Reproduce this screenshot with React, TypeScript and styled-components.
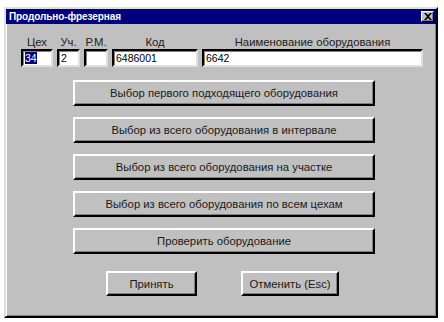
import React from 'react';
import styled, { createGlobalStyle } from 'styled-components';

const GlobalStyle = createGlobalStyle`
  html, body {
    margin: 0;
    padding: 0;
    background: #ffffff;
  }
  body {
    font-family: 'Liberation Sans', Arial, sans-serif;
    font-size: 11.3px;
  }
`;

const fields = [
  { label: 'Цех', width: 32, value: '34', selected: true },
  { label: 'Уч.', width: 23, value: '2' },
  { label: 'Р.М.', width: 24, value: '' },
  { label: 'Код', width: 86, value: '6486001' },
  { label: 'Наименование оборудования', width: 221, value: '6642' },
];

const actions = [
  'Выбор первого подходящего оборудования',
  'Выбор из всего оборудования в интервале',
  'Выбор из всего оборудования на участке',
  'Выбор из всего оборудования по всем цехам',
  'Проверить оборудование',
];

const App = () => {
  return (
    <>
      <GlobalStyle />
      <Window>
        <TitleBar>
          <Title>Продольно-фрезерная</Title>
          <CloseButton>
            <svg width="8" height="7" viewBox="0 0 8 7">
              <path d="M0 0h2l2 2 2-2h2L5 3.5 8 7H6L4 5 2 7H0l3-3.5z" fill="#000" />
            </svg>
          </CloseButton>
        </TitleBar>

        <Body>
          <FieldsRow>
            {fields.map((f) => (
              <Field key={f.label} $width={f.width}>
                <FieldLabel>{f.label}</FieldLabel>
                <TextBox>
                  {f.selected ? <Selected>{f.value}</Selected> : f.value}
                </TextBox>
              </Field>
            ))}
          </FieldsRow>

          <ActionList>
            {actions.map((a) => (
              <ActionButton key={a}>{a}</ActionButton>
            ))}
          </ActionList>

          <Footer>
            <DialogButton $width={91}>Принять</DialogButton>
            <DialogButton $width={98}>Отменить (Esc)</DialogButton>
          </Footer>
        </Body>
      </Window>
    </>
  );
};

export default App;

const Window = styled.div`
  margin: 7px 0 0 4px;
  width: 434px;
  height: 311px;
  box-sizing: border-box;
  background: #c0c0c0;
  border: 2px solid;
  border-color: #dfdfdf #000000 #000000 #dfdfdf;
  box-shadow: inset 1px 1px 0 #ffffff, inset -1px -1px 0 #808080;
  display: flex;
  flex-direction: column;
`;

const TitleBar = styled.div`
  height: 15px;
  background: #000080;
  display: flex;
  align-items: center;
  justify-content: space-between;
  padding: 0 2px 0 3px;
`;

const Title = styled.span`
  color: #ffffff;
  font-weight: bold;
  font-size: 10px;
  letter-spacing: -0.1px;
`;

const CloseButton = styled.div`
  width: 13px;
  height: 11px;
  box-sizing: border-box;
  background: #c0c0c0;
  border: 1px solid;
  border-color: #ffffff #000000 #000000 #ffffff;
  box-shadow: inset -1px -1px 0 #808080;
  display: flex;
  align-items: center;
  justify-content: center;
`;

const Body = styled.div`
  flex: 1;
  padding: 11px 0 0 15px;
  display: flex;
  flex-direction: column;
`;

const FieldsRow = styled.div`
  display: flex;
  gap: 4px;
`;

const Field = styled.div<{ $width: number }>`
  width: ${(p) => p.$width}px;
  display: flex;
  flex-direction: column;
  align-items: center;
`;

const FieldLabel = styled.div`
  height: 14px;
  line-height: 14px;
  color: #202020;
  white-space: nowrap;
`;

const TextBox = styled.div`
  width: 100%;
  height: 18px;
  box-sizing: border-box;
  background: #ffffff;
  border: 2px solid;
  border-color: #000000 #dfdfdf #dfdfdf #000000;
  box-shadow: inset 1px 1px 0 #808080;
  padding: 0 2px;
  line-height: 14px;
  font-size: 10.5px;
  color: #000;
  overflow: hidden;
  white-space: nowrap;
`;

const Selected = styled.span`
  background: #000080;
  color: #ffffff;
`;

const ActionList = styled.div`
  margin: 13px 0 0 52px;
  width: 302px;
  display: flex;
  flex-direction: column;
  gap: 11px;
`;

const ActionButton = styled.div`
  height: 26px;
  box-sizing: border-box;
  background: #c0c0c0;
  border: 2px solid;
  border-color: #ffffff #000000 #000000 #ffffff;
  box-shadow: inset -1px -1px 0 #808080;
  display: flex;
  align-items: center;
  justify-content: center;
  color: #1a1a1a;
`;

const Footer = styled.div`
  margin: 17px 0 0 85px;
  display: flex;
  gap: 44px;
`;

const DialogButton = styled(ActionButton)<{ $width: number }>`
  width: ${(p) => p.$width}px;
  height: 25px;
`;
